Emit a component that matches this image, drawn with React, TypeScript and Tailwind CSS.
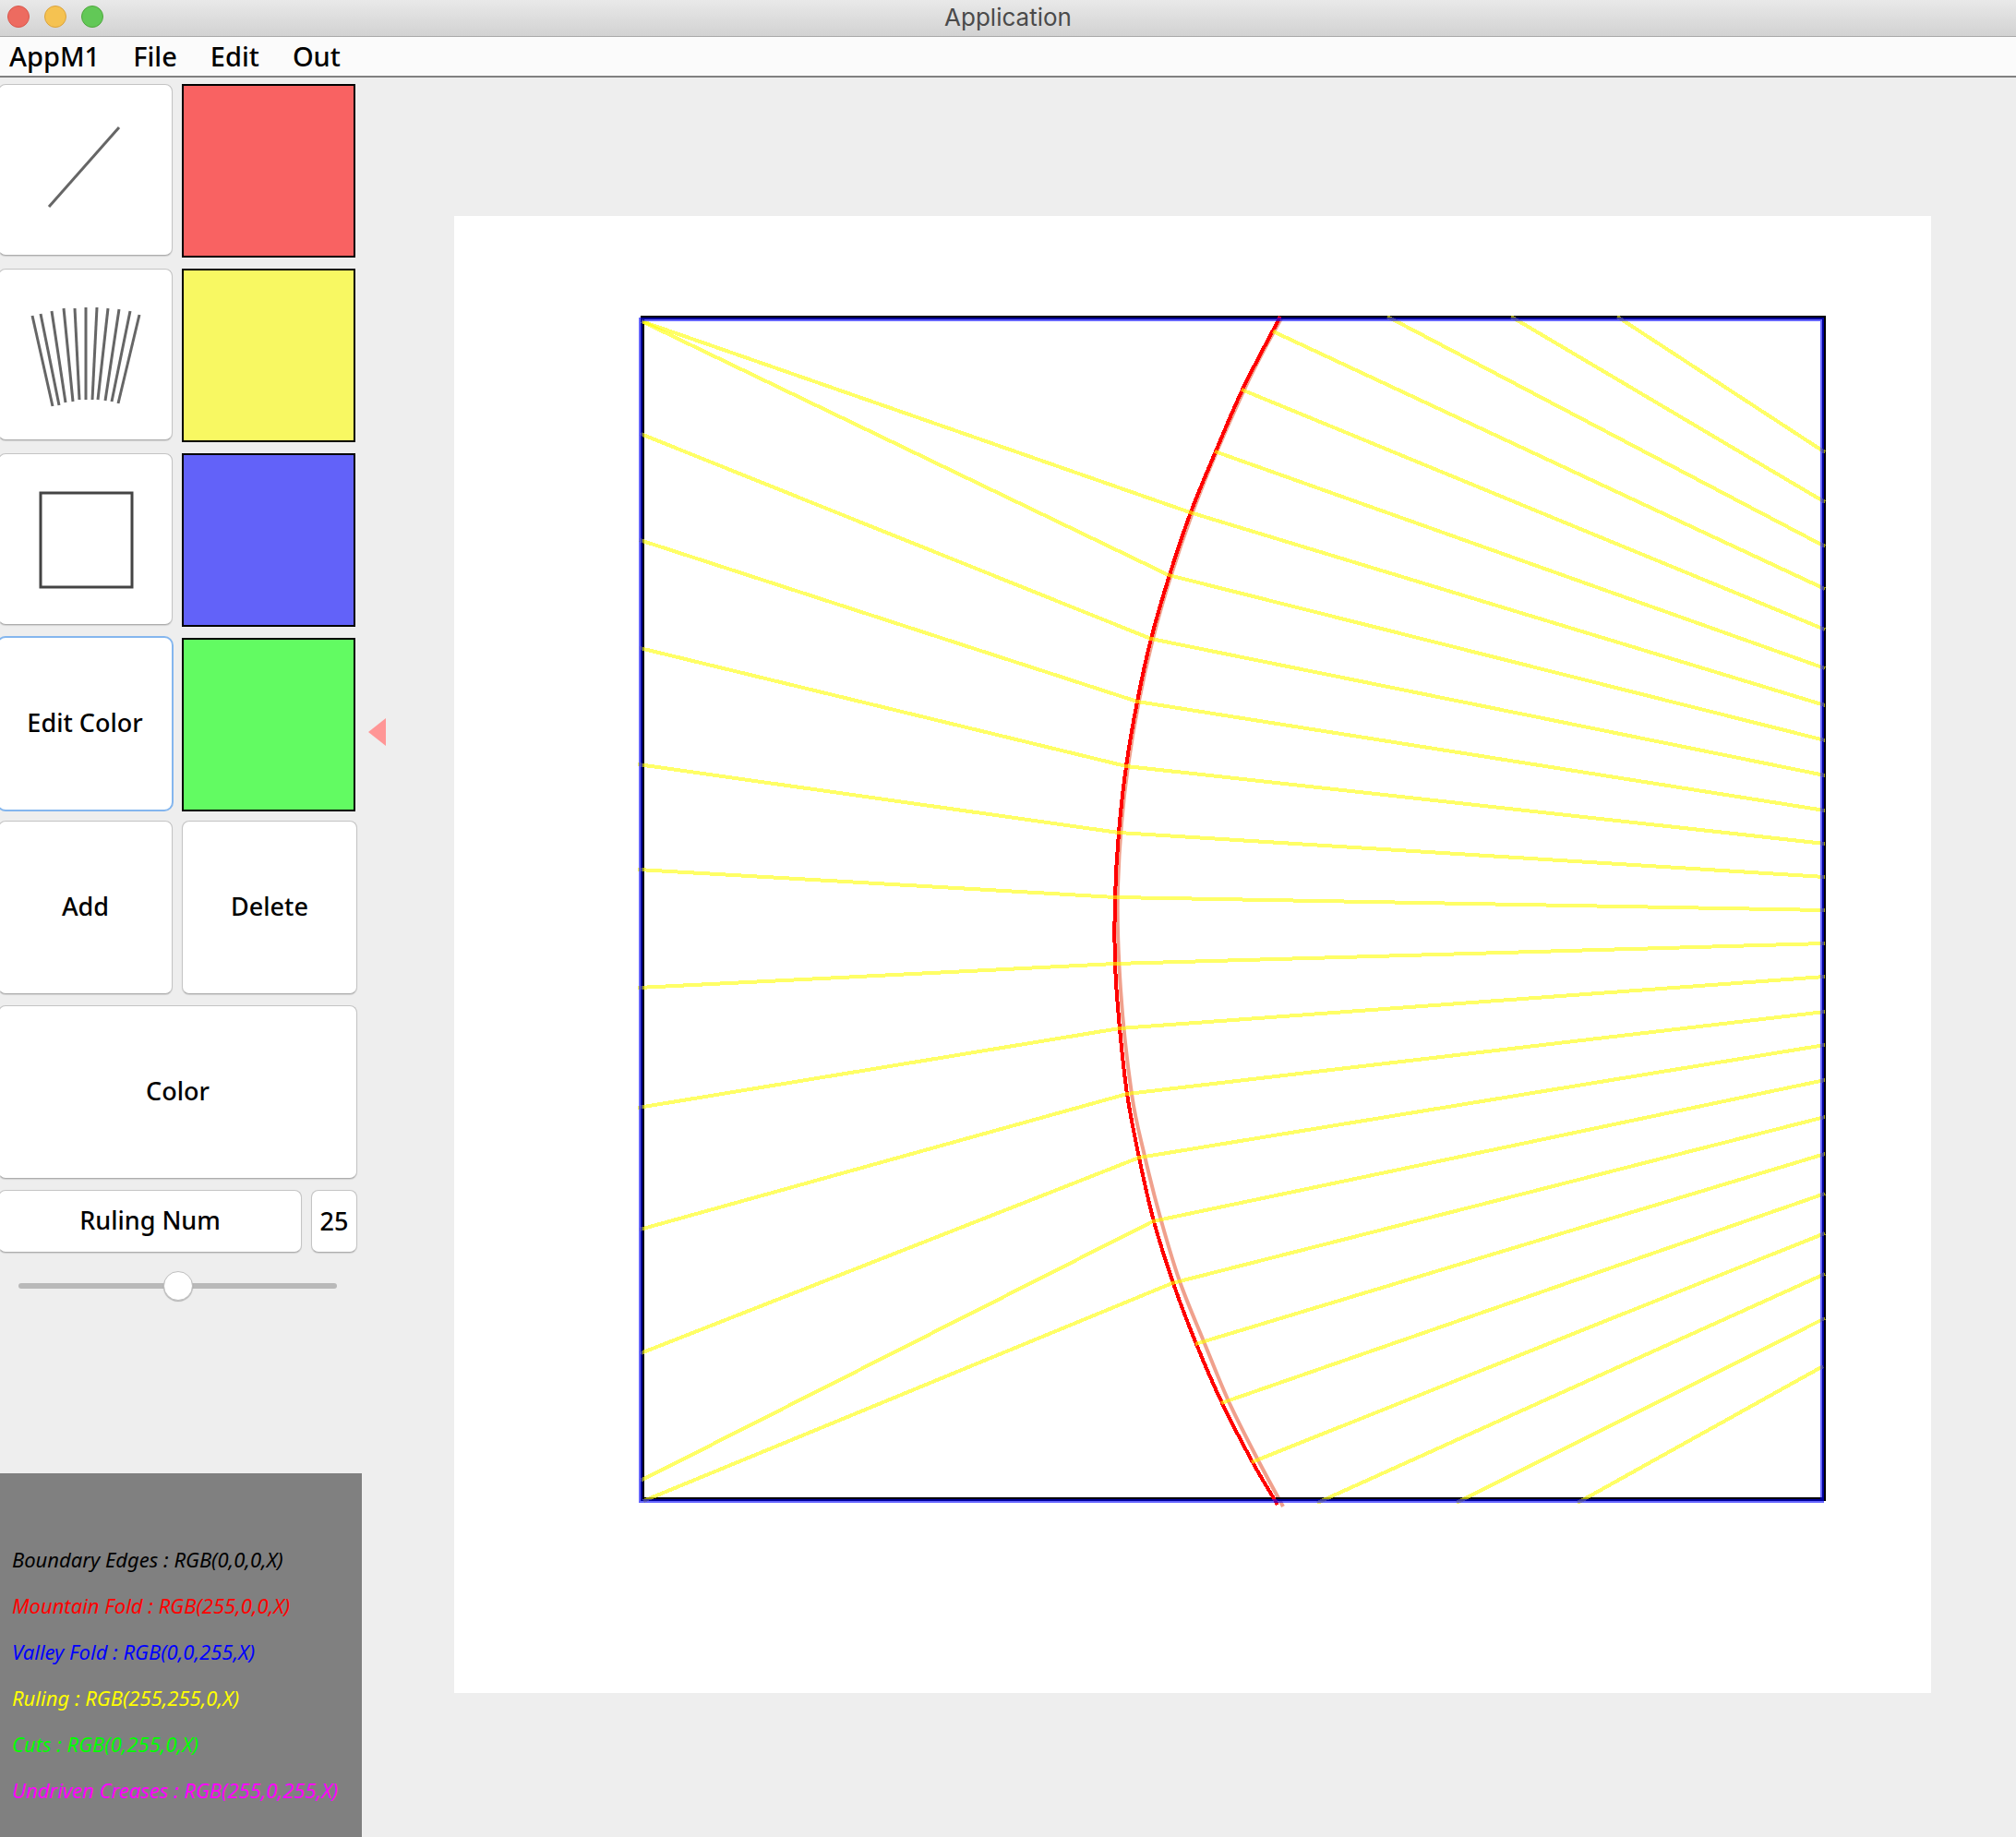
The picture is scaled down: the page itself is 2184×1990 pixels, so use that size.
import React, { useState } from "react";

type Point = [number, number];

const rulings: Point[][] = [
  [[1752, 343], [1977, 490]],
  [[1637, 343], [1977, 544]],
  [[1503, 343], [1977, 592]],
  [[1379, 359], [1977, 638]],
  [[1345, 422], [1977, 682]],
  [[1316, 489], [1977, 724]],
  [[695, 348], [1289, 555], [1977, 764]],
  [[695, 348], [1266, 623], [1977, 802]],
  [[694, 470], [1247, 692], [1977, 840]],
  [[693, 585], [1232, 760], [1977, 878]],
  [[693, 702], [1220, 830], [1977, 914]],
  [[691, 828], [1212, 902], [1977, 950]],
  [[691, 942], [1208, 972], [1977, 986]],
  [[691, 1070], [1208, 1044], [1977, 1022]],
  [[691, 1200], [1213, 1114], [1977, 1058]],
  [[693, 1332], [1221, 1185], [1977, 1096]],
  [[694, 1466], [1234, 1254], [1977, 1132]],
  [[694, 1604], [1249, 1323], [1977, 1170]],
  [[697, 1626], [1270, 1390], [1977, 1210]],
  [[1295, 1456], [1977, 1250]],
  [[1323, 1520], [1977, 1293]],
  [[1356, 1584], [1977, 1336]],
  [[1427, 1628], [1977, 1380]],
  [[1578, 1628], [1977, 1428]],
  [[1709, 1628], [1975, 1480]],
];

const fold: Point[] = [
  [1387, 343], [1379, 358], [1346, 422], [1317, 489], [1290, 555], [1267, 623],
  [1247, 692], [1232, 760], [1220, 830], [1212, 902], [1208, 972], [1208, 1044],
  [1213, 1114], [1221, 1185], [1234, 1254], [1250, 1323], [1271, 1390],
  [1296, 1456], [1324, 1520], [1357, 1584], [1384, 1630],
];

const sketch: Point[] = [
  [1389, 343], [1348, 422], [1292, 555], [1249, 692], [1222, 830], [1211, 960],
  [1214, 1072], [1226, 1185], [1240, 1252], [1257, 1319], [1278, 1388],
  [1304, 1453], [1331, 1518], [1362, 1580], [1390, 1632],
];

const toLine = (pts: Point[]) => pts.map((p) => p.join(",")).join(" ");

/** Smooth path through the points (Catmull-Rom converted to Béziers). */
function toCurve(pts: Point[]) {
  let d = `M${pts[0][0]} ${pts[0][1]}`;
  for (let i = 0; i < pts.length - 1; i++) {
    const a = pts[Math.max(i - 1, 0)];
    const b = pts[i];
    const c = pts[i + 1];
    const e = pts[Math.min(i + 2, pts.length - 1)];
    d += ` C${b[0] + (c[0] - a[0]) / 6} ${b[1] + (c[1] - a[1]) / 6} ${c[0] - (e[0] - b[0]) / 6} ${c[1] - (e[1] - b[1]) / 6} ${c[0]} ${c[1]}`;
  }
  return d;
}

const button =
  "rounded-lg border border-[#c4c4c4] border-b-[#adadad] bg-white shadow-[0_1px_1px_rgba(0,0,0,0.12)] text-[27px] leading-8 text-black";

const fan: number[][] = [
  [35, 51, 57, 149], [44, 49, 64, 148], [56, 46, 71, 145], [69, 43, 79, 144],
  [81, 43, 86, 142], [93, 42, 93, 142], [105, 42, 100, 142], [117, 43, 106, 142],
  [129, 44, 114, 143], [141, 46, 121, 144], [151, 50, 128, 146],
];

function ToolIcon({ children }: { children: React.ReactNode }) {
  return (
    <svg viewBox="-1 1 187 184" className="h-full w-full" fill="none" stroke="#666666" strokeWidth="3" aria-hidden="true">
      {children}
    </svg>
  );
}

const menus = ["AppM1", "File", "Edit", "Out"];

const legend = [
  { text: "Boundary Edges : RGB(0,0,0,X)", tone: "text-black" },
  { text: "Mountain Fold : RGB(255,0,0,X)", tone: "text-[#ff0000]" },
  { text: "Valley Fold : RGB(0,0,255,X)", tone: "text-[#0000ff]" },
  { text: "Ruling : RGB(255,255,0,X)", tone: "text-[#ffff00]" },
  { text: "Cuts : RGB(0,255,0,X)", tone: "text-[#00ff00]" },
  { text: "Undriven Creases : RGB(255,0,255,X)", tone: "text-[#ff00ff]" },
];

const swatches = [
  { name: "Red", fill: "bg-[#f96262]" },
  { name: "Yellow", fill: "bg-[#f8f862]" },
  { name: "Blue", fill: "bg-[#6262f9]" },
  { name: "Green", fill: "bg-[#62fb62]" },
];

export default function App() {
  const [count, setCount] = useState(25);
  return (
    <div className="flex min-h-screen flex-col bg-[#eeeeee] font-['Noto_Sans',sans-serif] text-black">
      <header className="grid h-10 grid-cols-[1fr_auto_1fr] items-center border-b border-[#a8a8a8] bg-linear-to-b from-[#e9e9e9] to-[#d2d2d2] pb-0.5">
        <div className="flex gap-4 pb-0.5 pl-2">
          <button aria-label="Close" className="size-6 rounded-full border border-[#d8584d] bg-[#ed6b60]" />
          <button aria-label="Minimize" className="size-6 rounded-full border border-[#dba33c] bg-[#f5c251]" />
          <button aria-label="Zoom" className="size-6 rounded-full border border-[#4fa73d] bg-[#62c857]" />
        </div>
        <h1 className="font-['Inter',sans-serif] text-[26px] leading-8 text-[#4a4a4a]">Application</h1>
      </header>

      <nav className="flex h-11 items-center gap-9 border-b-2 border-[#808080] bg-[#fbfbfb] pl-2.5">
        {menus.map((m) => (
          <button key={m} className="text-[29px] leading-9 font-medium">
            {m}
          </button>
        ))}
      </nav>

      <div className="flex flex-1">
        <aside className="flex w-[392px] shrink-0 flex-col overflow-hidden">
          <div className="mr-[5px] -ml-0.5 flex flex-col pt-[7px]">
            <div className="grid grid-cols-[189px_188px] gap-x-2.5">
              <div className="flex flex-col gap-3.5">
                <button aria-label="Line" className={`h-[186px] ${button}`}>
                  <ToolIcon>
                    <path d="M53 133L129 47" />
                  </ToolIcon>
                </button>
                <button aria-label="Rulings" className={`h-[186px] ${button}`}>
                  <ToolIcon>
                    {fan.map(([a, b, c, d]) => (
                      <path key={a} d={`M${a} ${b}L${c} ${d}`} />
                    ))}
                  </ToolIcon>
                </button>
                <button aria-label="Rectangle" className={`h-[186px] ${button}`}>
                  <ToolIcon>
                    <rect x="44" y="43" width="99" height="102" stroke="#444444" />
                  </ToolIcon>
                </button>
                <button className="mr-px h-[186px] rounded-lg bg-white pb-0.5 text-[27px] leading-8 font-medium ring-2 ring-[#84b6ee]">
                  Edit Color
                </button>
              </div>
              <div className="flex flex-col gap-3">
                {swatches.map((s) => (
                  <button key={s.name} aria-label={s.name} className={`h-[188px] border-2 border-black ${s.fill}`} />
                ))}
              </div>
            </div>

            <div className="mt-2.5 flex flex-col gap-3">
              <div className="grid h-[188px] grid-cols-[189px_1fr] gap-2.5">
                <button className={`pb-0.5 font-medium ${button}`}>Add</button>
                <button className={`pb-0.5 font-medium ${button}`}>Delete</button>
              </div>
              <button className={`h-[188px] pb-0.5 font-medium ${button}`}>Color</button>
              <div className="flex h-[68px] gap-2.5">
                <button className={`flex-1 pb-0.5 font-medium ${button}`}>Ruling Num</button>
                <button className={`w-[50px] font-medium ${button}`}>{count}</button>
              </div>
            </div>

            <input
              type="range"
              min={0}
              max={50}
              value={count}
              onChange={(e) => setCount(Number(e.target.value))}
              aria-label="Ruling Num"
              className="mt-[33px] mr-[22px] ml-[22px] h-1.5 appearance-none rounded-full bg-[#b9b9b9] outline-none [&::-webkit-slider-thumb]:size-8 [&::-webkit-slider-thumb]:appearance-none [&::-webkit-slider-thumb]:rounded-full [&::-webkit-slider-thumb]:border [&::-webkit-slider-thumb]:border-[#c0c0c0] [&::-webkit-slider-thumb]:bg-white [&::-webkit-slider-thumb]:shadow-[0_1px_1px_rgba(0,0,0,0.25)]"
            />
          </div>

          <ul className="mt-auto bg-[#808080] pt-[68px] pb-[26px] pl-[13px] text-[22px] leading-[50px] whitespace-nowrap italic">
            {legend.map((l) => (
              <li key={l.text} className={l.tone}>
                {l.text}
              </li>
            ))}
          </ul>
        </aside>

        <div className="w-[100px] shrink-0 pt-[693px] pl-[7px]">
          <svg viewBox="0 0 20 32" className="h-8 w-5" aria-hidden="true">
            <path d="M0 16L19 1V31Z" fill="#ff9696" />
          </svg>
        </div>

        <main className="min-w-0 flex-1 pt-[150px] pr-[92px]">
          <svg viewBox="492 234 1600 1600" className="aspect-square w-full bg-white" fill="none" role="img" aria-label="Crease pattern">
            <path d={toCurve(sketch)} stroke="#f0a08c" strokeWidth="4" />
            <g shapeRendering="crispEdges" strokeWidth="4">
              <rect x="696" y="344" width="1280" height="1280" stroke="#000000" />
              <path d={toCurve(fold)} stroke="#ff0000" />
              <g stroke="#ffff00" strokeOpacity="0.6">
                {rulings.map((r) => (
                  <polyline key={toLine(r)} points={toLine(r)} />
                ))}
              </g>
              <rect x="694" y="346" width="1280" height="1280" stroke="#0000ff" strokeOpacity="0.6" />
            </g>
          </svg>
        </main>
      </div>
    </div>
  );
}
